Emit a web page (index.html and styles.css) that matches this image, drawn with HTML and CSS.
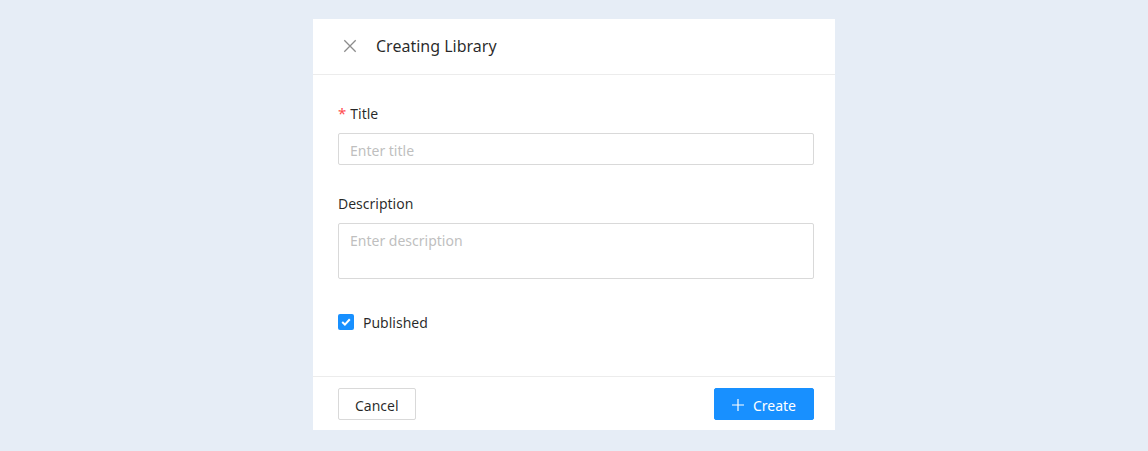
FILE: index.html
```html
<!DOCTYPE html>
<html>
<head>
    <meta charset="UTF-8">
    <title>Creating Library</title>
    <link rel="stylesheet" href="styles.css">
</head>
<body>
    <div class="drawer">
        <div class="drawer-header">
            <button class="close" type="button">
                <svg width="16" height="16" viewBox="0 0 16 16"><path d="M2.3 2.3L13.7 13.7M13.7 2.3L2.3 13.7" stroke="currentColor" stroke-width="1.3" fill="none"/></svg>
            </button>
            <div class="drawer-title">Creating Library</div>
        </div>
        <div class="drawer-body">
            <div class="form-item">
                <label class="label"><span class="req">*</span>Title</label>
                <input class="input" type="text" placeholder="Enter title">
            </div>
            <div class="form-item">
                <label class="label">Description</label>
                <textarea class="input textarea" placeholder="Enter description"></textarea>
            </div>
            <label class="check">
                <span class="box">
                    <svg width="10" height="8" viewBox="0 0 10 8"><path d="M1.2 4.1L3.9 6.6L8.8 1.3" stroke="#fff" stroke-width="2" fill="none"/></svg>
                </span>
                <span class="check-text">Published</span>
            </label>
        </div>
        <div class="drawer-footer">
            <button class="btn" type="button">Cancel</button>
            <button class="btn btn-primary" type="button">
                <svg width="14" height="14" viewBox="0 0 14 14"><path d="M7 1V13M1 7H13" stroke="#fff" stroke-width="1.2" fill="none"/></svg>
                Create
            </button>
        </div>
    </div>
</body>
</html>
```

FILE: styles.css
```css
html, body { margin: 0; padding: 0; }
body { background: #e6edf6; font-family: "Noto Sans", "Open Sans", sans-serif; font-size: 14px; color: rgba(0,0,0,.85); }

.drawer { width: 522px; margin: 19px 0 0 313px; background: #fff; }
.drawer-header { height: 56px; box-sizing: border-box; display: flex; align-items: center; padding: 0 0 2px 29px; border-bottom: 1px solid #ececec; }
.close { border: 0; background: none; padding: 0; width: 16px; height: 16px; color: rgba(0,0,0,.45); margin-right: 18px; display: flex; }
.drawer-title { font-size: 16px; line-height: 22px; }

.drawer-body { padding: 27px 21px 43px 25px; }
.form-item { display: flex; flex-direction: column; gap: 9px; margin-bottom: 27px; }
.form-item + .form-item { margin-bottom: 32px; }
.label { height: 22px; line-height: 23px; }
.req { color: #ff4d4f; margin-right: 4px; font-size: 15px; }
.input { height: 32px; box-sizing: border-box; border: 1px solid #d9d9d9; border-radius: 2px; padding: 5px 11px 3px; font: inherit; color: inherit; outline: none; }
.input::placeholder { color: #bfbfbf; }
.textarea { height: 56px; resize: none; line-height: 22px; padding-top: 6px; }

.check { display: flex; align-items: center; height: 22px; gap: 9px; }
.check-text { height: 22px; line-height: 24px; }
.box { width: 16px; height: 16px; border-radius: 2px; background: #1890ff; display: flex; align-items: center; justify-content: center; }

.drawer-footer { border-top: 1px solid #ececec; padding: 11px 21px 10px 25px; display: flex; justify-content: space-between; }
.btn { height: 32px; padding: 5px 16px 3px; border: 1px solid #d9d9d9; border-radius: 2px; background: #fff; font: inherit; color: rgba(0,0,0,.85); display: flex; align-items: center; gap: 8px; }
.btn-primary { background: #1890ff; border-color: #1890ff; color: #fff; padding-right: 17px; }
```
